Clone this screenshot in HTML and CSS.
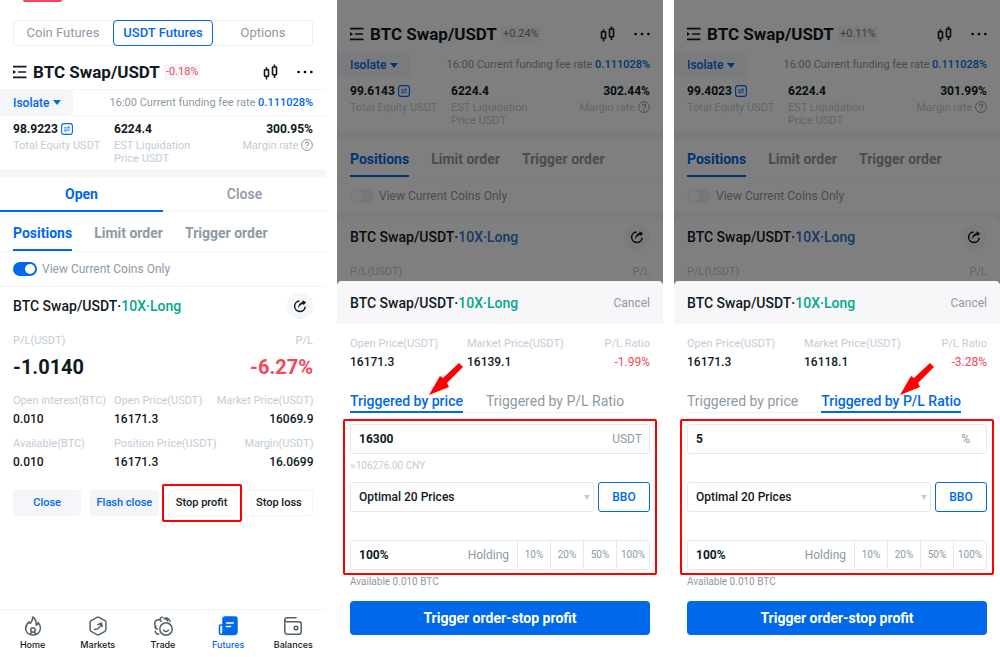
FILE: index.html
```html
<!DOCTYPE html>
<html lang="en">
<head>
    <meta charset="UTF-8">
    <meta name="viewport" content="width=device-width, initial-scale=1.0">
    <title>BTC Swap/USDT</title>
    <link rel="stylesheet" href="styles.css">
</head>
<body>
    <!-- shared icons -->
    <svg class="sprite" aria-hidden="true">
        <symbol id="i-menu" viewBox="0 0 15 14">
            <path d="M0 1.2h14.5M5.5 7H14M0 12.8h14.5" fill="none" stroke="currentColor" stroke-width="1.7"/>
            <path d="M0 4.8L3.4 7 0 9.2z" fill="currentColor"/>
        </symbol>
        <symbol id="i-candles" viewBox="0 0 16 16">
            <path d="M3.5 3.2v2.5M3.5 12.5V15.5M11.5 .5V3M11.5 11v3" stroke="currentColor" stroke-width="1.6"/>
            <rect x="1.5" y="5.7" width="4" height="6.6" rx=".5" fill="none" stroke="currentColor" stroke-width="1.6"/>
            <rect x="9.5" y="3" width="4" height="7.8" rx=".5" fill="none" stroke="currentColor" stroke-width="1.6"/>
        </symbol>
        <symbol id="i-dots" viewBox="0 0 16 4">
            <circle cx="1.6" cy="2" r="1.3"/><circle cx="8" cy="2" r="1.3"/><circle cx="14.4" cy="2" r="1.3"/>
        </symbol>
        <symbol id="i-swap" viewBox="0 0 12 12">
            <rect x=".6" y=".6" width="10.8" height="10.8" rx="2.5" fill="none" stroke="currentColor" stroke-width="1.1"/>
            <path d="M3 4.9h5.800L7 3.200M9 7.100H3.200l1.800 1.700" fill="none" stroke="currentColor" stroke-width=".9"/>
        </symbol>
        <symbol id="i-help" viewBox="0 0 12 12">
            <circle cx="6" cy="6" r="5.4" fill="none" stroke="currentColor"/>
            <path d="M4.4 4.7a1.6 1.6 0 1 1 2.4 1.4c-.6.3-.8.6-.8 1.2" fill="none" stroke="currentColor" stroke-width="1.1"/>
            <circle cx="6" cy="8.8" r=".7" fill="currentColor"/>
        </symbol>
        <symbol id="i-share" viewBox="0 0 14 14">
            <path d="M6.500 1.900A5.300 5.300 0 1 0 12.200 7.600" fill="none" stroke="currentColor" stroke-width="1.5"/>
            <path d="M5 9.500C5 6 6.600 3.500 9.400 2.900V1.300l3.800 1.900-2.600 3.100-.5-1.400C8 5.500 6.300 6.900 5 9.500z" fill="currentColor"/>
        </symbol>
        <symbol id="i-arrow" viewBox="0 0 35 34">
            <path d="M0 33L11 14l3 2L30 1l4 4-16 16 2 4z" fill="#ff0000"/>
        </symbol>
    </svg>

    <main class="screens">
        <!-- position list -->
        <section class="screen">
            <div class="peek"></div>
            <div class="segment">
                <button>Coin Futures</button>
                <button class="active">USDT Futures</button>
                <button>Options</button>
            </div>
            <header class="title-bar line">
                <svg class="icon-menu"><use href="#i-menu"/></svg>
                <h1>BTC Swap/USDT</h1>
                <span class="change down">-0.18%</span>
                <svg class="icon-candles"><use href="#i-candles"/></svg>
                <svg class="icon-dots"><use href="#i-dots"/></svg>
            </header>
            <div class="funding line">
                <button class="mode">Isolate <i class="caret"></i></button>
                <p>16:00 Current funding fee rate <b>0.111028%</b></p>
            </div>
            <div class="stats">
                <div><strong>98.9223 <svg class="icon-small blue"><use href="#i-swap"/></svg></strong><span>Total Equity USDT</span></div>
                <div><strong>6224.4</strong><span>EST Liquidation<br>Price USDT</span></div>
                <div><strong>300.95%</strong><span>Margin rate <svg class="icon-small"><use href="#i-help"/></svg></span></div>
            </div>
            <div class="band"></div>
            <div class="sides">
                <button class="active">Open</button>
                <button>Close</button>
            </div>
            <nav class="tabs">
                <button class="active">Positions</button>
                <button>Limit order</button>
                <button>Trigger order</button>
            </nav>
            <label class="toggle line"><input type="checkbox" checked>View Current Coins Only</label>
            <article class="position">
                <div class="position-head">
                    <h2>BTC Swap/USDT·<em>10X·Long</em></h2>
                    <button class="share" aria-label="Share"><svg><use href="#i-share"/></svg></button>
                </div>
                <div class="profit">
                    <div><span>P/L(USDT)</span><strong>-1.0140</strong></div>
                    <div><span>P/L</span><strong class="down">-6.27%</strong></div>
                </div>
                <div class="details">
                    <div><span>Open interest(BTC)</span><strong>0.010</strong></div>
                    <div><span>Open Price(USDT)</span><strong>16171.3</strong></div>
                    <div><span>Market Price(USDT)</span><strong>16069.9</strong></div>
                    <div><span>Available(BTC)</span><strong>0.010</strong></div>
                    <div><span>Position Price(USDT)</span><strong>16171.3</strong></div>
                    <div><span>Margin(USDT)</span><strong>16.0699</strong></div>
                </div>
                <div class="actions">
                    <button class="soft">Close</button>
                    <button class="soft">Flash close</button>
                    <button class="marked">Stop profit</button>
                    <button>Stop loss</button>
                </div>
            </article>
            <nav class="bottom-nav">
                <a href="#">
                    <svg viewBox="0 0 20 20"><path d="M9.500 1c.7 2.700-.6 4.200-2.200 6.300C5.700 6.900 6 5.900 6 5.900 3.700 8 2.600 10.300 2.600 12.500c0 4 3.300 6.500 7.400 6.500s7.400-2.700 7.400-6.700c0-2-.8-4-2.200-5.700-.3 1.400-1 2.200-2 2.600C13.500 5.600 12.500 2.500 9.500 1z"/><circle cx="10" cy="14" r="2.200"/><path d="M7.500 18.300L8.500 15.800M12.500 18.300L11.500 15.800"/></svg>
                    Home
                </a>
                <a href="#">
                    <svg viewBox="0 0 20 20"><path d="M9 1.400a2 2 0 0 1 2 0l5.900 3.300a2 2 0 0 1 1 1.700v7.200a2 2 0 0 1-1 1.700L11 18.600a2 2 0 0 1-2 0l-5.900-3.300a2 2 0 0 1-1-1.700V6.400a2 2 0 0 1 1-1.700zM6.500 13.500c3.500-.2 6-2 6.800-6.200M10 8.700l3.400-1.700.8 3.600"/></svg>
                    Markets
                </a>
                <a href="#">
                    <svg viewBox="0 0 20 20"><circle cx="13" cy="13" r="6.200"/><path d="M10.500 14.200c1 1.600 4 1.600 5 0M8.300 5.300A3.700 3.700 0 1 0 3 10.400M7 3c.6-1 1.300-1.700 2.300-1.700M2 10.500c0 1.300.8 2.300 2.300 2.500M2.300 15.300c.3 1.800 1.500 2.900 3.300 3M11 2.300c2-1 5-.1 6 3.200M11 2.500c1.600 0 3 .9 3.500 2.300"/></svg>
                    Trade
                </a>
                <a href="#" class="active">
                    <svg viewBox="0 0 20 20"><path class="fill" d="M7 1h10a2 2 0 0 1 2 2v12.500a3 3 0 0 1-3 3H5V3a2 2 0 0 1 2-2z"/><path d="M5 9H2.500a1 1 0 0 0-1 1v6.500a1.900 1.900 0 0 0 3.800 0"/><path class="cut" d="M8.500 7h6.800M8.500 10.500h4"/></svg>
                    Futures
                </a>
                <a href="#">
                    <svg viewBox="0 0 20 20"><path d="M13 1.700H4a2.200 2.200 0 0 0-2.200 2.200V15.700A2.500 2.500 0 0 0 4.300 18.200h11.400a2.500 2.500 0 0 0 2.500-2.500V8.200a2.500 2.500 0 0 0-2.500-2.500H4A2 2 0 0 1 2 4"/><circle cx="13" cy="12" r="1.800"/></svg>
                    Balances
                </a>
            </nav>
        </section>

        <!-- stop profit by price -->
        <section class="screen dimmed">
            <header class="title-bar">
                <svg class="icon-menu"><use href="#i-menu"/></svg>
                <h1>BTC Swap/USDT</h1>
                <span class="change">+0.24%</span>
                <svg class="icon-candles"><use href="#i-candles"/></svg>
                <svg class="icon-dots"><use href="#i-dots"/></svg>
            </header>
            <div class="funding">
                <button class="mode">Isolate <i class="caret"></i></button>
                <p>16:00 Current funding fee rate <b>0.111028%</b></p>
            </div>
            <div class="stats">
                <div><strong>99.6143 <svg class="icon-small blue"><use href="#i-swap"/></svg></strong><span>Total Equity USDT</span></div>
                <div><strong>6224.4</strong><span>EST Liquidation<br>Price USDT</span></div>
                <div><strong>302.44%</strong><span>Margin rate <svg class="icon-small"><use href="#i-help"/></svg></span></div>
            </div>
            <div class="band"></div>
            <nav class="tabs">
                <button class="active">Positions</button>
                <button>Limit order</button>
                <button>Trigger order</button>
            </nav>
            <label class="toggle"><input type="checkbox">View Current Coins Only</label>
            <div class="card-wrap">
                <article class="position">
                    <div class="position-head">
                        <h2>BTC Swap/USDT·<em>10X·Long</em></h2>
                        <button class="share" aria-label="Share"><svg><use href="#i-share"/></svg></button>
                    </div>
                    <div class="profit">
                        <div><span>P/L(USDT)</span></div>
                        <div><span>P/L</span></div>
                    </div>
                </article>
            </div>

            <form class="sheet">
                <div class="sheet-head">
                    <h2>BTC Swap/USDT·<em>10X·Long</em></h2>
                    <button type="button">Cancel</button>
                </div>
                <div class="sheet-body">
                    <div class="quotes">
                        <div><span>Open Price(USDT)</span><strong>16171.3</strong></div>
                        <div><span>Market Price(USDT)</span><strong>16139.1</strong></div>
                        <div><span>P/L Ratio</span><strong class="down">-1.99%</strong></div>
                    </div>
                    <div class="trigger-tabs">
                        <button type="button" class="active">Triggered by price<svg class="pointer"><use href="#i-arrow"/></svg></button>
                        <button type="button">Triggered by P/L Ratio</button>
                    </div>
                    <div class="fields">
                        <label class="field"><input type="text" value="16300" aria-label="Trigger price"><span>USDT</span></label>
                        <p class="hint">≈106276.00 CNY</p>
                        <div class="price-row">
                            <div class="select">
                                <select aria-label="Order price"><option>Optimal 20 Prices</option></select>
                                <i class="caret"></i>
                            </div>
                            <button type="button" class="bbo">BBO</button>
                        </div>
                        <div class="field amount">
                            <input type="text" value="100%" aria-label="Amount">
                            <span>Holding</span>
                            <div class="shares">
                                <button type="button">10%</button>
                                <button type="button">20%</button>
                                <button type="button">50%</button>
                                <button type="button">100%</button>
                            </div>
                        </div>
                    </div>
                    <p class="available">Available 0.010 BTC</p>
                    <button type="button" class="submit">Trigger order-stop profit</button>
                </div>
            </form>
        </section>

        <!-- stop profit by P/L ratio -->
        <section class="screen dimmed">
            <header class="title-bar">
                <svg class="icon-menu"><use href="#i-menu"/></svg>
                <h1>BTC Swap/USDT</h1>
                <span class="change">+0.11%</span>
                <svg class="icon-candles"><use href="#i-candles"/></svg>
                <svg class="icon-dots"><use href="#i-dots"/></svg>
            </header>
            <div class="funding">
                <button class="mode">Isolate <i class="caret"></i></button>
                <p>16:00 Current funding fee rate <b>0.111028%</b></p>
            </div>
            <div class="stats">
                <div><strong>99.4023 <svg class="icon-small blue"><use href="#i-swap"/></svg></strong><span>Total Equity USDT</span></div>
                <div><strong>6224.4</strong><span>EST Liquidation<br>Price USDT</span></div>
                <div><strong>301.99%</strong><span>Margin rate <svg class="icon-small"><use href="#i-help"/></svg></span></div>
            </div>
            <div class="band"></div>
            <nav class="tabs">
                <button class="active">Positions</button>
                <button>Limit order</button>
                <button>Trigger order</button>
            </nav>
            <label class="toggle"><input type="checkbox">View Current Coins Only</label>
            <div class="card-wrap">
                <article class="position">
                    <div class="position-head">
                        <h2>BTC Swap/USDT·<em>10X·Long</em></h2>
                        <button class="share" aria-label="Share"><svg><use href="#i-share"/></svg></button>
                    </div>
                    <div class="profit">
                        <div><span>P/L(USDT)</span></div>
                        <div><span>P/L</span></div>
                    </div>
                </article>
            </div>

            <form class="sheet">
                <div class="sheet-head">
                    <h2>BTC Swap/USDT·<em>10X·Long</em></h2>
                    <button type="button">Cancel</button>
                </div>
                <div class="sheet-body">
                    <div class="quotes">
                        <div><span>Open Price(USDT)</span><strong>16171.3</strong></div>
                        <div><span>Market Price(USDT)</span><strong>16118.1</strong></div>
                        <div><span>P/L Ratio</span><strong class="down">-3.28%</strong></div>
                    </div>
                    <div class="trigger-tabs">
                        <button type="button">Triggered by price</button>
                        <button type="button" class="active">Triggered by P/L Ratio<svg class="pointer"><use href="#i-arrow"/></svg></button>
                    </div>
                    <div class="fields">
                        <label class="field percent"><input type="text" value="5" aria-label="Trigger ratio"><span>%</span></label>
                        <p class="hint"></p>
                        <div class="price-row">
                            <div class="select">
                                <select aria-label="Order price"><option>Optimal 20 Prices</option></select>
                                <i class="caret"></i>
                            </div>
                            <button type="button" class="bbo">BBO</button>
                        </div>
                        <div class="field amount">
                            <input type="text" value="100%" aria-label="Amount">
                            <span>Holding</span>
                            <div class="shares">
                                <button type="button">10%</button>
                                <button type="button">20%</button>
                                <button type="button">50%</button>
                                <button type="button">100%</button>
                            </div>
                        </div>
                    </div>
                    <p class="available">Available 0.010 BTC</p>
                    <button type="button" class="submit">Trigger order-stop profit</button>
                </div>
            </form>
        </section>
    </main>
</body>
</html>
```
FILE: styles.css
```css
* {
    box-sizing: border-box;
    margin: 0;
    padding: 0;
}
body {
    background: #ffffff;
    color: #0f1923;
    font-family: Roboto, "Liberation Sans", sans-serif;
    font-size: 12px;
    line-height: 16px;
}
button, input, select {
    font: inherit;
    color: inherit;
    background: none;
    border: none;
    outline: none;
}
button {
    cursor: pointer;
    white-space: nowrap;
}
.sprite {
    display: none;
}
.screens {
    display: grid;
    grid-template-columns: repeat(3, 1fr);
    gap: 11px;
    min-height: 100vh;
}
.screen {
    position: relative;
    display: flex;
    flex-direction: column;
    background: #ffffff;
    overflow: hidden;
}
.down {
    color: #f5465a;
}
.line {
    border-bottom: 1px solid #f4f5f7;
}

/* market type */
.peek {
    width: 39px;
    height: 2px;
    margin-left: 23px;
    border-radius: 0 0 6px 6px;
    background: #f5465a;
}
.segment {
    display: grid;
    grid-template-columns: repeat(3, 1fr);
    height: 26px;
    margin: 18px 13px 0;
    border-radius: 4px;
    box-shadow: inset 0 0 0 1px #eceef0;
    color: #8d9aa5;
    font-size: 13px;
}
.segment .active {
    border: 1px solid #0068eb;
    border-radius: 4px;
    color: #0068eb;
    font-weight: 500;
}

/* title */
.title-bar {
    display: flex;
    align-items: center;
    height: 44px;
    padding: 8px 13px 0;
}
.title-bar h1 {
    margin: 0 4px 0 6px;
    font-size: 17px;
    font-weight: 700;
    line-height: 24px;
    white-space: nowrap;
}
.icon-menu {
    width: 14px;
    height: 14px;
}
.icon-candles {
    width: 16px;
    height: 16px;
    margin: 0 18px 0 auto;
}
.icon-dots {
    width: 16px;
    height: 4px;
}
.change {
    padding: 0 2px;
    border-radius: 2px;
    background: #f5f6f8;
    color: #6f8290;
    font-size: 11px;
}
.change.down {
    color: #f5465a;
}
.funding {
    display: flex;
    justify-content: space-between;
    align-items: center;
    height: 26px;
    padding-right: 13px;
    color: #8d9aa5;
    font-size: 11px;
}
.funding b {
    color: #0068eb;
    font-weight: 500;
}
.mode {
    align-self: stretch;
    display: flex;
    align-items: center;
    gap: 4px;
    padding: 0 12px 0 13px;
    border-radius: 0 4px 4px 0;
    background: #f5f6fa;
    color: #0068eb;
    font-size: 12px;
    font-weight: 500;
}
.caret {
    border: 4px solid transparent;
    border-top: 5px solid currentColor;
    border-bottom: none;
}

/* account numbers */
.stats {
    display: grid;
    grid-template-columns: 101px 1fr 1fr;
    padding: 5px 13px 4px;
}
.stats strong, .stats span {
    display: block;
}
.stats strong {
    margin-bottom: 2px;
    font-weight: 700;
}
.stats span, .profit span, .details span, .quotes span {
    display: block;
    color: #c2ccd6;
    font-size: 11px;
    line-height: 13px;
    white-space: nowrap;
}
.stats > :last-child, .profit > :last-child, .details > :nth-child(3n), .quotes > :last-child {
    text-align: right;
}
.icon-small {
    width: 12px;
    height: 12px;
    vertical-align: -2px;
    color: #8d9aa5;
}
.icon-small.blue {
    color: #0068eb;
}
.band {
    height: 8px;
    background: #f5f6f8;
}

/* tabs */
.sides {
    display: grid;
    grid-template-columns: 1fr 1fr;
    height: 35px;
    color: #8d9aa5;
    font-size: 14px;
    font-weight: 500;
}
.sides button {
    border-bottom: 2px solid #f5f6f8;
}
.sides .active {
    border-color: #0068eb;
    color: #0068eb;
    font-weight: 700;
}
.tabs {
    display: flex;
    gap: 22px;
    height: 40px;
    padding: 0 13px;
    border-bottom: 1px solid #f4f5f7;
    color: #8d9aa5;
    font-size: 14px;
    font-weight: 700;
}
.tabs button {
    padding-top: 4px;
    border-bottom: 2px solid transparent;
}
.tabs .active {
    border-color: #0068eb;
    color: #0068eb;
}
.toggle {
    display: flex;
    align-items: center;
    gap: 5px;
    height: 35px;
    padding: 0 13px;
    color: #8d9aa5;
}
.toggle input {
    appearance: none;
    width: 24px;
    height: 14px;
    border-radius: 7px;
    background: #eef0f4;
}
.toggle input::before {
    content: "";
    display: block;
    width: 10px;
    height: 10px;
    margin: 2px;
    border-radius: 50%;
    background: #ffffff;
}
.toggle input:checked {
    background: #0068eb;
}
.toggle input:checked::before {
    margin-left: 12px;
}

/* position */
.card-wrap {
    padding-top: 4px;
    background: #f5f6f8;
}
.card-wrap .position {
    padding-top: 7px;
    border-radius: 8px 8px 0 0;
}
.position {
    padding: 6px 13px 0;
    background: #ffffff;
}
.position-head {
    display: flex;
    justify-content: space-between;
    align-items: center;
}
h2 {
    font-size: 14px;
    font-weight: 500;
    line-height: 18px;
}
h2 em {
    color: #00a88a;
    font-style: normal;
}
.share {
    display: flex;
    align-items: center;
    justify-content: center;
    width: 26px;
    height: 26px;
    border-radius: 50%;
    background: #f5f6f8;
}
.share svg {
    width: 14px;
    height: 14px;
}
.profit {
    display: flex;
    justify-content: space-between;
    padding-top: 15px;
}
.profit strong {
    display: block;
    margin-top: 8px;
    font-size: 20px;
    font-weight: 700;
    line-height: 24px;
}
.details {
    display: grid;
    grid-template-columns: 101px 1fr auto;
    row-gap: 10px;
    margin-top: 15px;
}
.details strong, .quotes strong {
    display: block;
    margin-top: 4px;
    font-weight: 500;
}
.actions {
    display: grid;
    grid-template-columns: repeat(4, 1fr);
    gap: 9px;
    margin-top: 20px;
    font-size: 11px;
    font-weight: 500;
}
.actions button {
    height: 26px;
    border: 1px solid #f4f5f7;
    border-radius: 3px;
}
.actions .soft {
    background: #f5f6fa;
    color: #0068eb;
}

/* red marker frames */
.marked, .fields {
    position: relative;
}
.marked::after, .fields::after {
    content: "";
    position: absolute;
    inset: -7px;
    border: 2px solid #ff0000;
    border-radius: 2px;
    pointer-events: none;
}
.fields::after {
    inset: -5px -7px;
}

/* bottom navigation */
.bottom-nav {
    display: grid;
    grid-template-columns: repeat(5, 1fr);
    height: 48px;
    margin-top: auto;
    padding-top: 6px;
    border-top: 1px solid #f4f5f7;
    font-family: Inter, sans-serif;
    font-size: 9px;
    font-weight: 500;
    line-height: 14px;
}
.bottom-nav a {
    display: flex;
    flex-direction: column;
    align-items: center;
    gap: 2px;
    color: #0f1923;
    text-decoration: none;
}
.bottom-nav svg {
    width: 20px;
    height: 20px;
    fill: none;
    stroke: #53606b;
    stroke-width: 1.5;
    stroke-linecap: round;
    stroke-linejoin: round;
}
.bottom-nav .active {
    color: #0068eb;
}
.bottom-nav .active svg {
    stroke: #0068eb;
}
.bottom-nav .fill {
    fill: #0068eb;
}
.bottom-nav .cut {
    stroke: #ffffff;
}

/* bottom sheet over a dimmed page */
.dimmed {
    padding-top: 8px;
}
.dimmed::before {
    content: "";
    position: absolute;
    inset: 0;
    background: rgba(0, 0, 0, 0.5);
}
.dimmed .stats {
    padding-bottom: 3px;
}
.dimmed .card-wrap em {
    color: #2f74c8;
}
.sheet {
    position: absolute;
    left: 0;
    right: 0;
    bottom: 0;
    border-radius: 5px 5px 0 0;
    background: #ffffff;
}
.sheet-head {
    display: flex;
    justify-content: space-between;
    align-items: center;
    height: 43px;
    padding: 0 13px;
    border-radius: 5px 5px 0 0;
    background: #f7f7fa;
}
.sheet-head button {
    color: #8d9aa5;
}
.sheet-body {
    padding: 13px 13px 22px;
}
.quotes {
    display: grid;
    grid-template-columns: 39% 1fr auto;
}
.quotes .down {
    font-weight: 400;
}
.trigger-tabs {
    display: flex;
    width: fit-content;
    gap: 23px;
    margin-top: 22px;
    box-shadow: inset 0 -1px 0 #eef0f2;
    color: #8d9aa5;
    font-size: 14px;
    line-height: 18px;
}
.trigger-tabs button {
    position: relative;
    padding-bottom: 1px;
    border-bottom: 2px solid transparent;
}
.trigger-tabs .active {
    border-color: #0068eb;
    color: #0068eb;
    font-weight: 500;
}
.pointer {
    position: absolute;
    left: 79px;
    bottom: 15px;
    width: 35px;
    height: 34px;
}
.fields {
    margin-top: 11px;
}
.field {
    display: flex;
    align-items: center;
    height: 30px;
    padding-right: 7px;
    border: 1px solid #e6e9ed;
    border-radius: 3px;
    color: #8d9aa5;
}
.field input {
    flex: 1;
    min-width: 0;
    padding-left: 8px;
    color: #0f1923;
    font-weight: 700;
}
.field.percent {
    padding-right: 16px;
}
.hint {
    height: 28px;
    padding-top: 5px;
    color: #c2ccd6;
    font-size: 10px;
    line-height: 13px;
}
.price-row {
    display: flex;
    gap: 4px;
    height: 30px;
}
.select {
    position: relative;
    flex: 1;
}
.select select {
    appearance: none;
    width: 100%;
    height: 30px;
    padding: 0 20px 0 8px;
    border: 1px solid #e6e9ed;
    border-radius: 3px;
    font-weight: 500;
}
.select .caret {
    position: absolute;
    top: 13px;
    right: 4px;
    border-width: 5px 3px 0;
    color: #c2ccd6;
    pointer-events: none;
}
.bbo {
    width: 52px;
    border: 1px solid #0068eb;
    border-radius: 3px;
    color: #0068eb;
    font-weight: 500;
}
.amount {
    margin-top: 28px;
    padding-right: 0;
}
.shares {
    display: grid;
    grid-template-columns: repeat(4, 33px);
    align-self: stretch;
    margin-left: 8px;
    font-size: 10px;
}
.shares button {
    border-left: 1px solid #e6e9ed;
}
.available {
    margin-top: 5px;
    color: #8d9aa5;
    font-size: 10px;
    line-height: 13px;
}
.submit {
    width: 100%;
    height: 34px;
    margin-top: 13px;
    border-radius: 4px;
    background: #0068eb;
    color: #ffffff;
    font-size: 14px;
    font-weight: 700;
}
```
